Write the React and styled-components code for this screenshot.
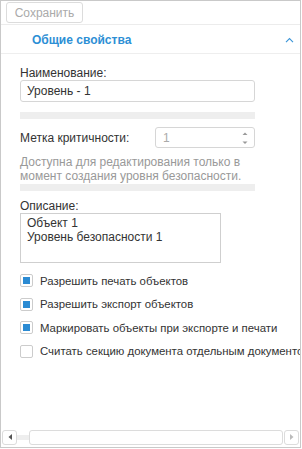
import styled, { createGlobalStyle } from "styled-components";

const GlobalStyle = createGlobalStyle`
  html, body {
    margin: 0;
    padding: 0;
    background: #fff;
  }
  body {
    font-family: "Liberation Sans", Arial, sans-serif;
    font-size: 12px;
    color: #333;
  }
`;

const CHECKS = [
  { label: "Разрешить печать объектов", checked: true },
  { label: "Разрешить экспорт объектов", checked: true },
  { label: "Маркировать объекты при экспорте и печати", checked: true },
  { label: "Считать секцию документа отдельным документом", checked: false },
];

function App() {
  return (
    <>
      <GlobalStyle />
      <S.Frame>
        <S.Toolbar>
          <S.Button disabled>Сохранить</S.Button>
        </S.Toolbar>
        <S.Header>
          <S.HeaderTitle>Общие свойства</S.HeaderTitle>
          <svg width="9" height="6" viewBox="0 0 9 6">
            <path d="M1 5.2 L4.5 1.5 L8 5.2" fill="none" stroke="#3a95d8" strokeWidth="1.1" />
          </svg>
        </S.Header>
        <S.Body>
          <S.Label>Наименование:</S.Label>
          <S.Input>Уровень - 1</S.Input>
          <S.Bar />
          <S.Row>
            <S.Label>Метка критичности:</S.Label>
            <S.Spinner>
              <span>1</span>
              <S.Arrows>
                <svg width="6" height="14" viewBox="0 0 6 14">
                  <path d="M0.5 4 L3 1.5 L5.5 4 Z" fill="#999" />
                  <path d="M0.5 10.5 L3 13 L5.5 10.5 Z" fill="#999" />
                </svg>
              </S.Arrows>
            </S.Spinner>
          </S.Row>
          <S.Hint>
            Доступна для редактирования только в момент создания уровня безопасности.
          </S.Hint>
          <S.Bar $top={1} />
          <S.Label $top={8}>Описание:</S.Label>
          <S.TextArea>
            <div>Объект 1</div>
            <div>Уровень безопасности 1</div>
          </S.TextArea>
          <S.Checks>
            {CHECKS.map((c, idx) => (
              <S.CheckRow key={idx}>
                <S.Box>{c.checked && <S.Mark />}</S.Box>
                <S.CheckText>{c.label}</S.CheckText>
              </S.CheckRow>
            ))}
          </S.Checks>
        </S.Body>
        <S.Scroll>
          <S.ScrollBtn>
            <svg width="4" height="6" viewBox="0 0 4 6">
              <path d="M4 0 L0.5 3 L4 6 Z" fill="#555" />
            </svg>
          </S.ScrollBtn>
          <S.Track />
          <S.Thumb />
          <S.ScrollBtn>
            <svg width="4" height="6" viewBox="0 0 4 6">
              <path d="M0 0 L3.5 3 L0 6 Z" fill="#bbb" />
            </svg>
          </S.ScrollBtn>
        </S.Scroll>
      </S.Frame>
    </>
  );
}
export default App;

const Frame = styled.div`
  box-sizing: border-box;
  width: 301px;
  height: 448px;
  border: 1px solid #c9c9c9;
  display: flex;
  flex-direction: column;
  overflow: hidden;
`;

const Toolbar = styled.div`
  box-sizing: border-box;
  height: 24px;
  padding: 1px 0 0 5px;
  border-bottom: 1px solid #ececec;
`;

const Button = styled.button`
  box-sizing: border-box;
  width: 77px;
  height: 21px;
  padding: 0;
  border: 1px solid #dcdcdc;
  border-radius: 3px;
  background: #fff;
  color: #aaa;
  font-family: "Liberation Sans", Arial, sans-serif;
  font-size: 12px;
`;

const Header = styled.div`
  height: 29px;
  box-sizing: border-box;
  border-bottom: 1px solid #eeeeee;
  display: flex;
  align-items: center;
  justify-content: space-between;
  padding: 2px 6px 0 31px;
`;

const HeaderTitle = styled.span`
  font-weight: bold;
  color: #2d8fd5;
`;

const Body = styled.div`
  flex: 1;
  padding: 12px 0 0 19px;
  width: 235px;
  display: flex;
  flex-direction: column;
`;

const Label = styled.div`
  line-height: 14px;
  margin-top: ${({ $top }) => ($top ? `${$top}px` : "0")};
  white-space: nowrap;
`;

const Input = styled.div`
  box-sizing: border-box;
  height: 22px;
  border: 1px solid #d6d6d6;
  border-radius: 3px;
  padding: 0 6px;
  display: flex;
  align-items: center;
`;

const Bar = styled.div`
  height: 7px;
  background: #eeeeee;
  margin-top: ${({ $top }) => ($top !== undefined ? `${$top}px` : "10px")};
`;

const Row = styled.div`
  margin-top: 8px;
  display: flex;
  align-items: center;
  justify-content: space-between;
`;

const Spinner = styled.div`
  box-sizing: border-box;
  width: 100px;
  height: 21px;
  border: 1px solid #d6d6d6;
  border-radius: 3px;
  padding: 0 6px 0 7px;
  display: flex;
  align-items: center;
  justify-content: space-between;
  color: #aaa;
`;

const Arrows = styled.span`
  display: flex;
  align-items: center;
`;

const Hint = styled.div`
  margin-top: 7px;
  line-height: 14px;
  color: #999;
`;

const TextArea = styled.div`
  box-sizing: border-box;
  width: 201px;
  height: 50px;
  border: 1px solid #cfcfcf;
  padding: 2px 6px;
  line-height: 14px;
`;

const Checks = styled.div`
  margin-top: 6px;
  display: flex;
  flex-direction: column;
`;

const CheckRow = styled.div`
  height: 23.5px;
  display: flex;
  align-items: center;
  gap: 7px;
  white-space: nowrap;
`;

const CheckText = styled.span`
  font-size: 11.4px;
`;

const Box = styled.span`
  box-sizing: border-box;
  flex: none;
  width: 13px;
  height: 13px;
  border: 1px solid #cccccc;
  border-radius: 2px;
  display: flex;
  align-items: center;
  justify-content: center;
`;

const Mark = styled.span`
  width: 7px;
  height: 7px;
  background: #2b8bd3;
`;

const Scroll = styled.div`
  height: 16px;
  margin: 0 1px 2px 1px;
  display: flex;
  align-items: center;
`;

const ScrollBtn = styled.span`
  box-sizing: border-box;
  width: 15px;
  height: 15px;
  border: 1px solid #dcdcdc;
  border-radius: 3px;
  display: flex;
  align-items: center;
  justify-content: center;
`;

const Track = styled.span`
  width: 12px;
  height: 5px;
  background: #eeeeee;
`;

const Thumb = styled.span`
  flex: 1;
  box-sizing: border-box;
  height: 15px;
  border: 1px solid #dcdcdc;
  border-radius: 3px;
  margin-right: 1px;
`;

const S = {
  Frame,
  Toolbar,
  Button,
  Header,
  HeaderTitle,
  Body,
  Label,
  Input,
  Bar,
  Row,
  Spinner,
  Arrows,
  Hint,
  TextArea,
  Checks,
  CheckRow,
  CheckText,
  Box,
  Mark,
  Scroll,
  ScrollBtn,
  Track,
  Thumb,
};
